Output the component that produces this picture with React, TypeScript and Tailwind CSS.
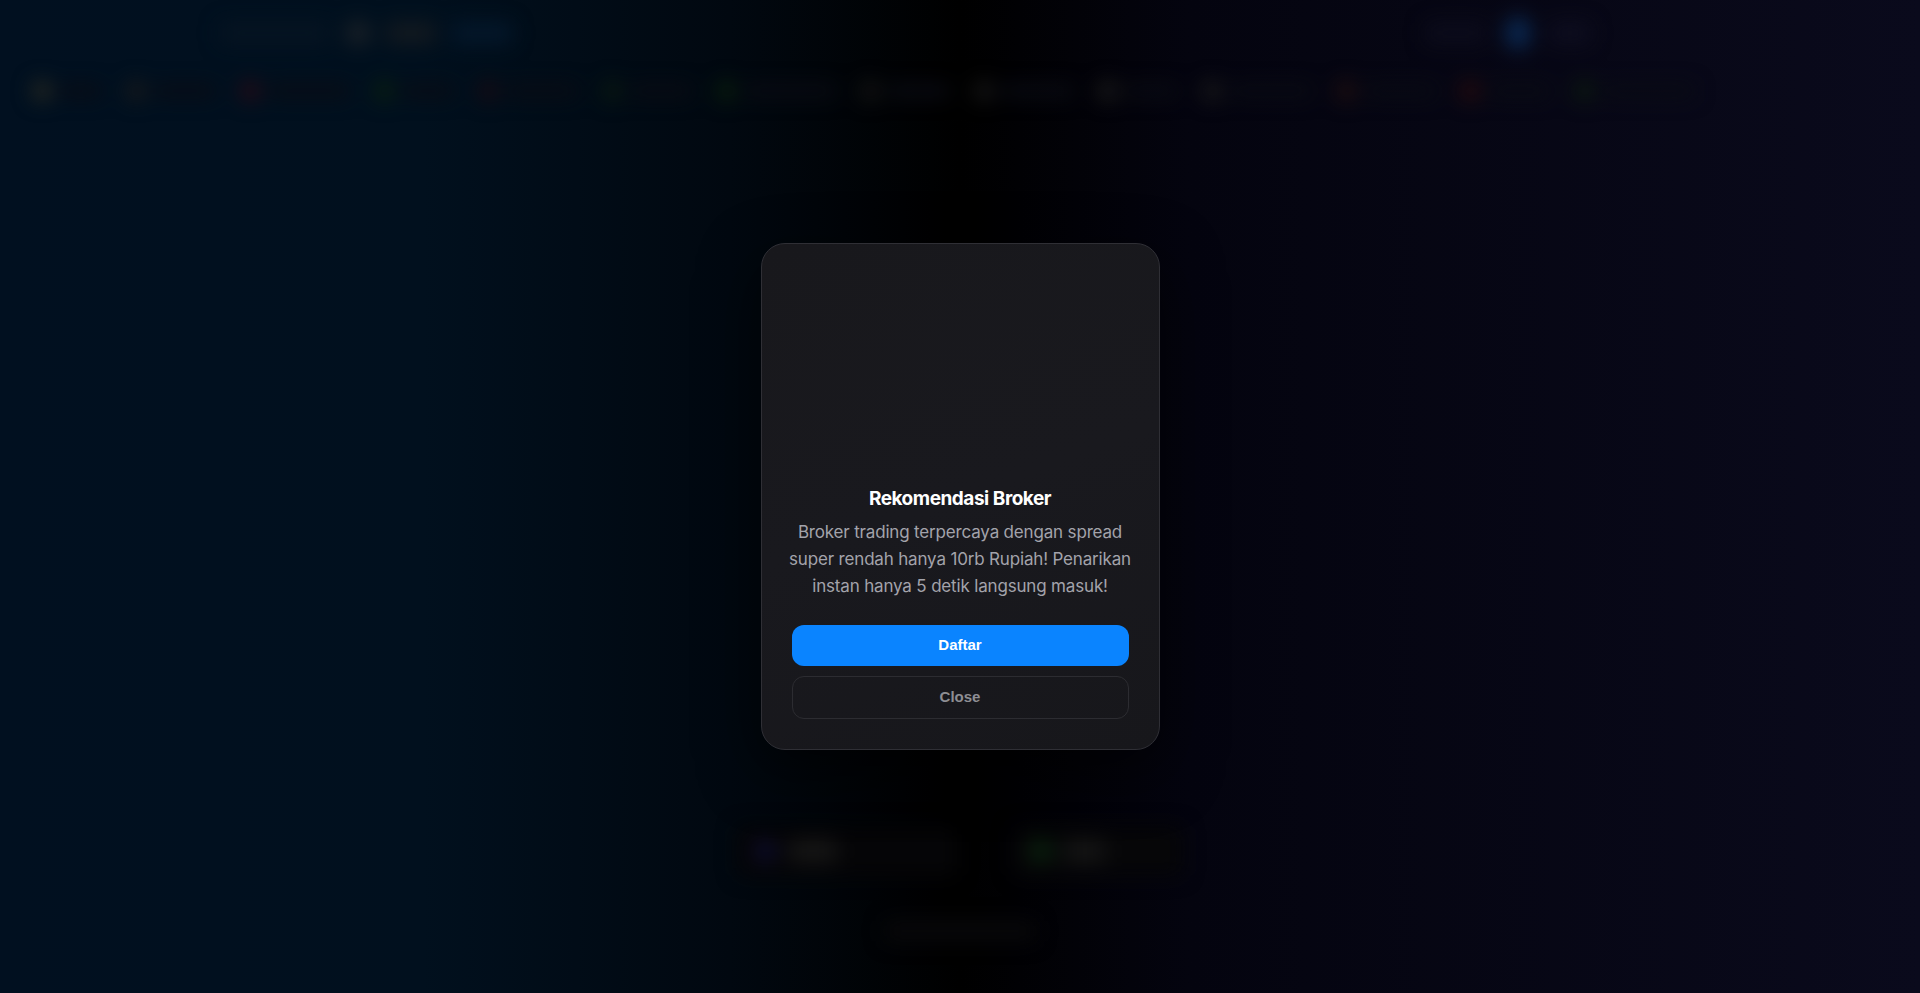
import { useState } from "react";

/**
 * Broker recommendation popup over a blurred, dimmed trading dashboard.
 */

const TICKERS = [
  { w: "w-[70px]", dot: "bg-[#2a2a20]" },
  { w: "w-[90px]", dot: "bg-[#1a1a1a]" },
  { w: "w-[110px]", dot: "bg-[#2a0a14]" },
  { w: "w-[80px]", dot: "bg-[#0a200e]" },
  { w: "w-[100px]", dot: "bg-[#1a0a12]" },
  { w: "w-[90px]", dot: "bg-[#0a1a10]" },
  { w: "w-[120px]", dot: "bg-[#0a200c]" },
  { w: "w-[90px]", dot: "bg-[#151515]" },
  { w: "w-[100px]", dot: "bg-[#181818]" },
  { w: "w-[80px]", dot: "bg-[#1c1c1c]" },
  { w: "w-[110px]", dot: "bg-[#1a1a1a]" },
  { w: "w-[100px]", dot: "bg-[#221010]" },
  { w: "w-[90px]", dot: "bg-[#2a0c0c]" },
  { w: "w-[120px]", dot: "bg-[#0c1c0e]" },
];

const DESC = [
  "Broker trading terpercaya dengan spread",
  "super rendah hanya 10rb Rupiah! Penarikan",
  "instan hanya 5 detik langsung masuk!",
];

function BlurredPage() {
  return (
    <div className="absolute inset-0 overflow-hidden bg-[linear-gradient(90deg,#011020_0%,#01101e_22%,#010810_38%,#000000_50%,#04040f_62%,#0a0a1c_100%)]">
      <div className="flex flex-col blur-[10px]">
        {/* header */}
        <div className="flex h-[66px] items-center justify-between pl-[220px] pr-[330px]">
          <div className="flex items-center gap-4">
            <div className="h-5 w-[110px] rounded bg-[#061422]" />
            <div className="h-6 w-6 rounded-full bg-[#1c2228]" />
            <div className="h-5 w-[50px] rounded bg-[#141a20]" />
            <div className="h-5 w-[60px] rounded bg-[#04182c]" />
          </div>
          <div className="flex items-center gap-5">
            <div className="h-5 w-[60px] rounded bg-[#0c0c1c]" />
            <div className="h-8 w-6 rounded-full bg-[#0a2a55]" />
            <div className="h-5 w-[40px] rounded bg-[#0e0e20]" />
          </div>
        </div>
        {/* ticker strip */}
        <div className="flex h-[50px] items-center gap-6 px-8">
          {TICKERS.map((t, i) => (
            <div key={i} className={`flex items-center gap-2 ${t.w}`}>
              <div className={`h-5 w-5 rounded-full ${t.dot}`} />
              <div className="h-3 flex-1 rounded bg-[#0a0c14]" />
            </div>
          ))}
        </div>
        <div className="h-[710px]" />
        {/* bottom cards */}
        <div className="flex justify-center gap-14">
          <div className="flex h-[50px] w-[220px] items-center gap-3 rounded-lg bg-[#050507] px-4">
            <div className="h-6 w-6 rounded-full bg-[#0c0c2a]" />
            <div className="h-6 w-12 rounded bg-[#151515]" />
          </div>
          <div className="flex h-[50px] w-[170px] items-center gap-3 rounded-lg bg-[#060608] px-4">
            <div className="h-6 w-6 rounded-full bg-[#08200c]" />
            <div className="h-6 w-10 rounded bg-[#141414]" />
          </div>
        </div>
        <div className="mt-[45px] flex justify-center">
          <div className="h-5 w-[150px] rounded bg-[#08080a]" />
        </div>
      </div>
    </div>
  );
}

export default function App() {
  const [open, setOpen] = useState(true);

  return (
    <div className="relative h-[993px] w-full overflow-hidden bg-black font-['Inter',sans-serif]">
      <BlurredPage />
      {open && (
        <div className="absolute inset-0 flex items-start justify-center pt-[243px]">
          <div className="flex w-[399px] flex-col rounded-[24px] border border-[#2f2f35] bg-[linear-gradient(160deg,#18181c_0%,#19191e_50%,#17171b_100%)] px-[30px] pb-[30px] pt-[30px] shadow-[0_20px_60px_rgba(0,0,0,0.6)]">
            <div className="h-[205px]" />
            <h2 className="mt-[6px] text-center text-[19px] font-bold leading-[28px] tracking-[-0.025em] text-white">
              Rekomendasi Broker
            </h2>
            <p className="-mx-[12px] mt-[6px] flex flex-col items-center text-[17px] leading-[27px] tracking-[-0.01em] text-[#a3a3ab]">
              {DESC.map((line) => (
                <span key={line} className="whitespace-nowrap">{line}</span>
              ))}
            </p>
            <button className="mt-[25px] h-[41px] w-full rounded-[12px] bg-[#0a84ff] font-['Liberation_Sans',Arial,sans-serif] text-[15px] font-bold text-white">
              Daftar
            </button>
            <button
              onClick={() => setOpen(false)}
              className="mt-[10px] h-[43px] w-full rounded-[12px] border border-[#2c2c31] font-['Liberation_Sans',Arial,sans-serif] text-[15px] font-bold text-[#8e8e93]"
            >
              Close
            </button>
          </div>
        </div>
      )}
    </div>
  );
}
